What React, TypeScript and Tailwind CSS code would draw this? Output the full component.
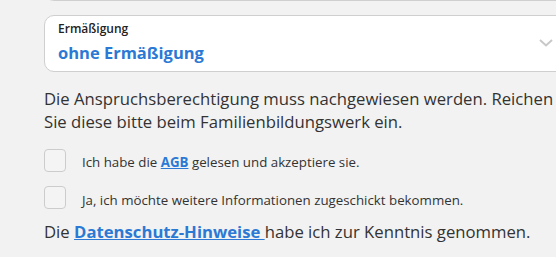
import React from "react";

export default function App() {
  return (
    <div
      className="w-[556px] h-[257px] overflow-hidden bg-[#f2f2f2] text-[#333333]"
      style={{ fontFamily: '"Open Sans", "Liberation Sans", sans-serif' }}
    >
      <div className="flex flex-col pl-[44px]">
        <div className="-mt-[11px] h-[12px] w-[522px] rounded-b-[10px] border border-[#cfcfcf] bg-white" />
        <div className="mt-[14px] flex w-[522px] items-center justify-between rounded-[10px] border border-[#cfcfcf] bg-white pl-[13px] pr-[12px] pt-[5px] pb-[7px]">
          <div className="flex flex-col">
            <div className="text-[12px] font-semibold leading-[16px] text-[#222222]">Ermäßigung</div>
            <div className="mt-[5px] text-[16.5px] font-bold leading-[22px] text-[#2b79d4]">ohne Ermäßigung</div>
          </div>
          <svg width="14" height="8" viewBox="0 0 14 8" className="mt-[1px]">
            <path d="M1 1 L7 6.5 L13 1" fill="none" stroke="#c8c8c8" strokeWidth="2" />
          </svg>
        </div>
        <p className="mt-[15px] w-[515px] text-[16.7px] leading-[23px] text-[#333333]">
          Die Anspruchsberechtigung muss nachgewiesen werden. Reichen Sie diese bitte beim Familienbildungswerk ein.
        </p>
        <div className="mt-[16px] flex items-start gap-[16px]">
          <div className="h-[23px] w-[22px] shrink-0 rounded-[4px] border border-[#cccccc] bg-[#f4f4f4]" />
          <div className="mt-[4px] text-[13.3px] leading-[18px] text-[#333333]">
            Ich habe die{" "}
            <a className="font-bold text-[#2b79d4] underline">AGB</a> gelesen und akzeptiere sie.
          </div>
        </div>
        <div className="mt-[14px] flex items-start gap-[16px]">
          <div className="h-[23px] w-[22px] shrink-0 rounded-[4px] border border-[#cccccc] bg-[#f4f4f4]" />
          <div className="mt-[5px] text-[13.3px] leading-[18px] text-[#333333]">
            Ja, ich möchte weitere Informationen zugeschickt bekommen.
          </div>
        </div>
        <p className="mt-[11px] text-[16.7px] leading-[23px] text-[#333333]">
          Die{" "}
          <a className="font-bold text-[#2b79d4] underline">Datenschutz-Hinweise </a>
          habe ich zur Kenntnis genommen.
        </p>
      </div>
    </div>
  );
}
